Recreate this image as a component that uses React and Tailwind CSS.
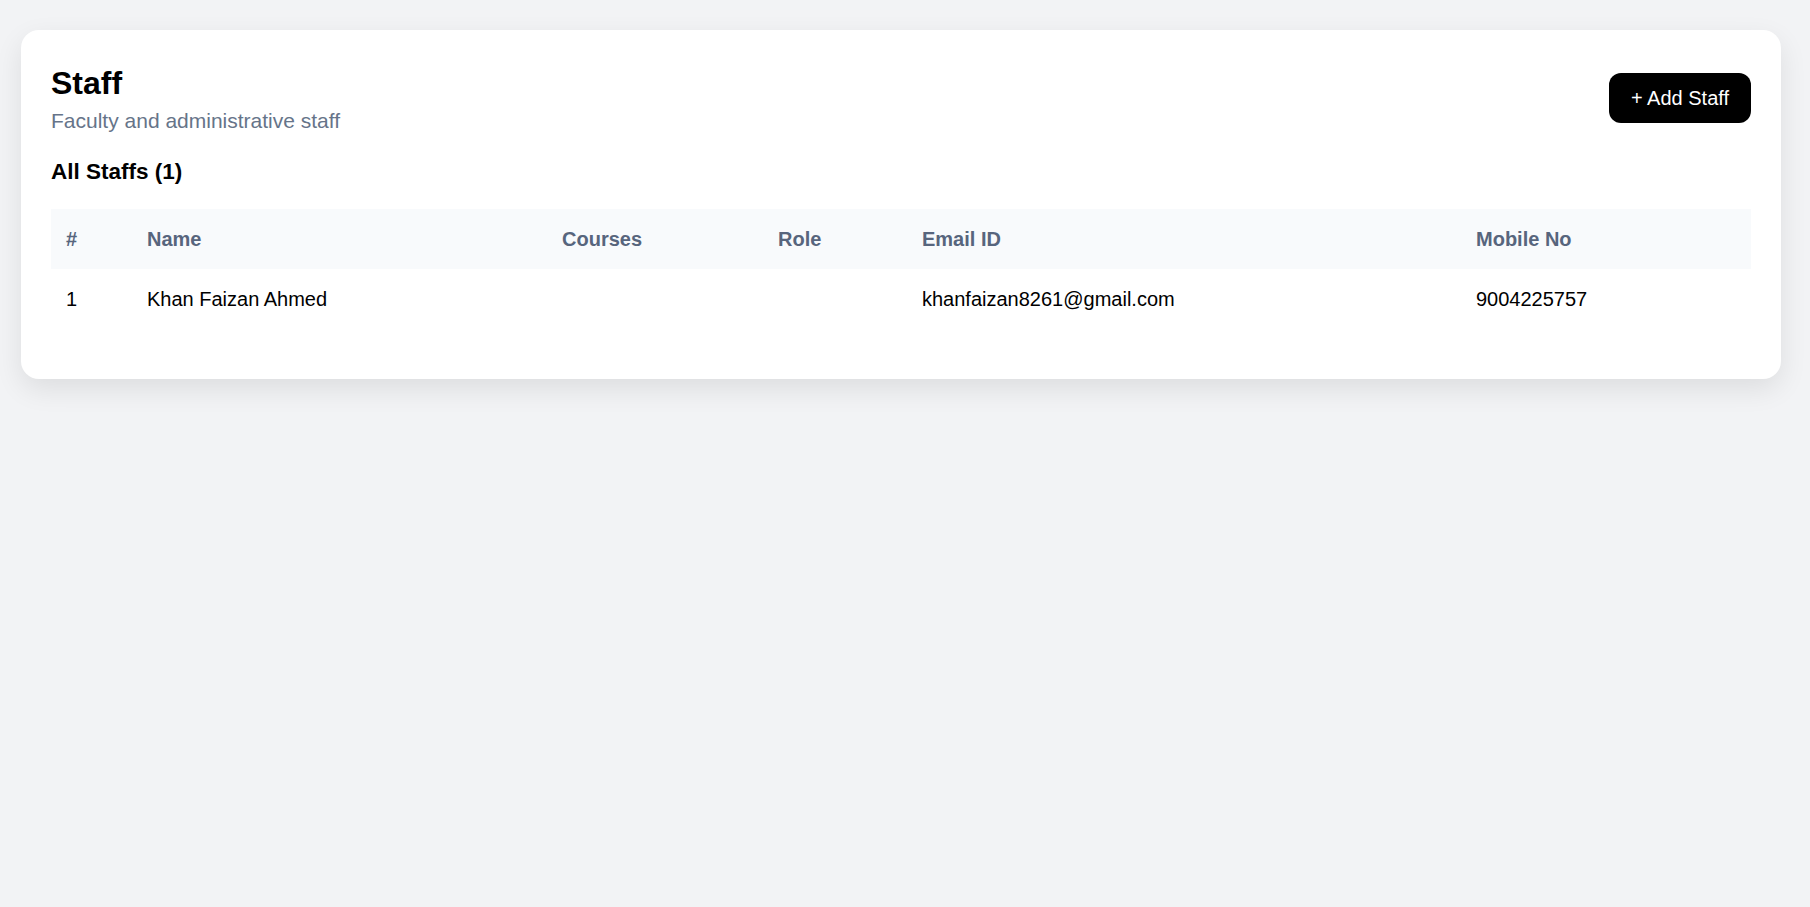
const staff = [
  {
    id: 1,
    name: "Khan Faizan Ahmed",
    courses: "",
    role: "",
    email: "khanfaizan8261@gmail.com",
    mobile: "9004225757",
  },
];

const columns = [
  { label: "#", width: "w-[81px]" },
  { label: "Name", width: "w-[415px]" },
  { label: "Courses", width: "w-[216px]" },
  { label: "Role", width: "w-[144px]" },
  { label: "Email ID", width: "w-[554px]" },
  { label: "Mobile No", width: "w-[290px]" },
];

const App = () => {
  return (
    <div className="min-h-screen bg-[#f2f3f5] pt-[30px] pl-[21px] font-['Liberation_Sans',Arial,sans-serif]">
      <div className="w-[1760px] bg-white rounded-[18px] shadow-[0_10px_28px_rgba(0,0,0,0.09)] px-[30px] pt-[30px] pb-[50px]">
        {/* HEADER */}
        <div className="flex items-center justify-between">
          <div>
            <h1 className="text-[32px] leading-[46px] font-bold text-black">
              Staff
            </h1>
            <p className="text-[21px] leading-[29px] text-[#667489]">
              Faculty and administrative staff
            </p>
          </div>

          <button className="h-[50px] w-[142px] bg-black text-white text-[20px] rounded-[12px]">
            + Add Staff
          </button>
        </div>

        {/* TABLE */}
        <h2 className="mt-[20px] text-[22.5px] leading-[33px] font-bold text-black">
          All Staffs ({staff.length})
        </h2>

        <table className="mt-[21px] w-full table-fixed text-left text-[20px]">
          <thead className="bg-[#f8fafc]">
            <tr className="h-[60px]">
              {columns.map((col) => (
                <th
                  key={col.label}
                  className={`${col.width} px-[15px] font-bold text-[#57657d]`}
                >
                  {col.label}
                </th>
              ))}
            </tr>
          </thead>
          <tbody>
            {staff.map((s, i) => (
              <tr key={s.id} className="h-[60px] text-black">
                <td className="px-[15px]">{i + 1}</td>
                <td className="px-[15px]">{s.name}</td>
                <td className="px-[15px]">{s.courses}</td>
                <td className="px-[15px]">{s.role}</td>
                <td className="px-[15px]">{s.email}</td>
                <td className="px-[15px]">{s.mobile}</td>
              </tr>
            ))}
          </tbody>
        </table>
      </div>
    </div>
  );
};

export default App;
